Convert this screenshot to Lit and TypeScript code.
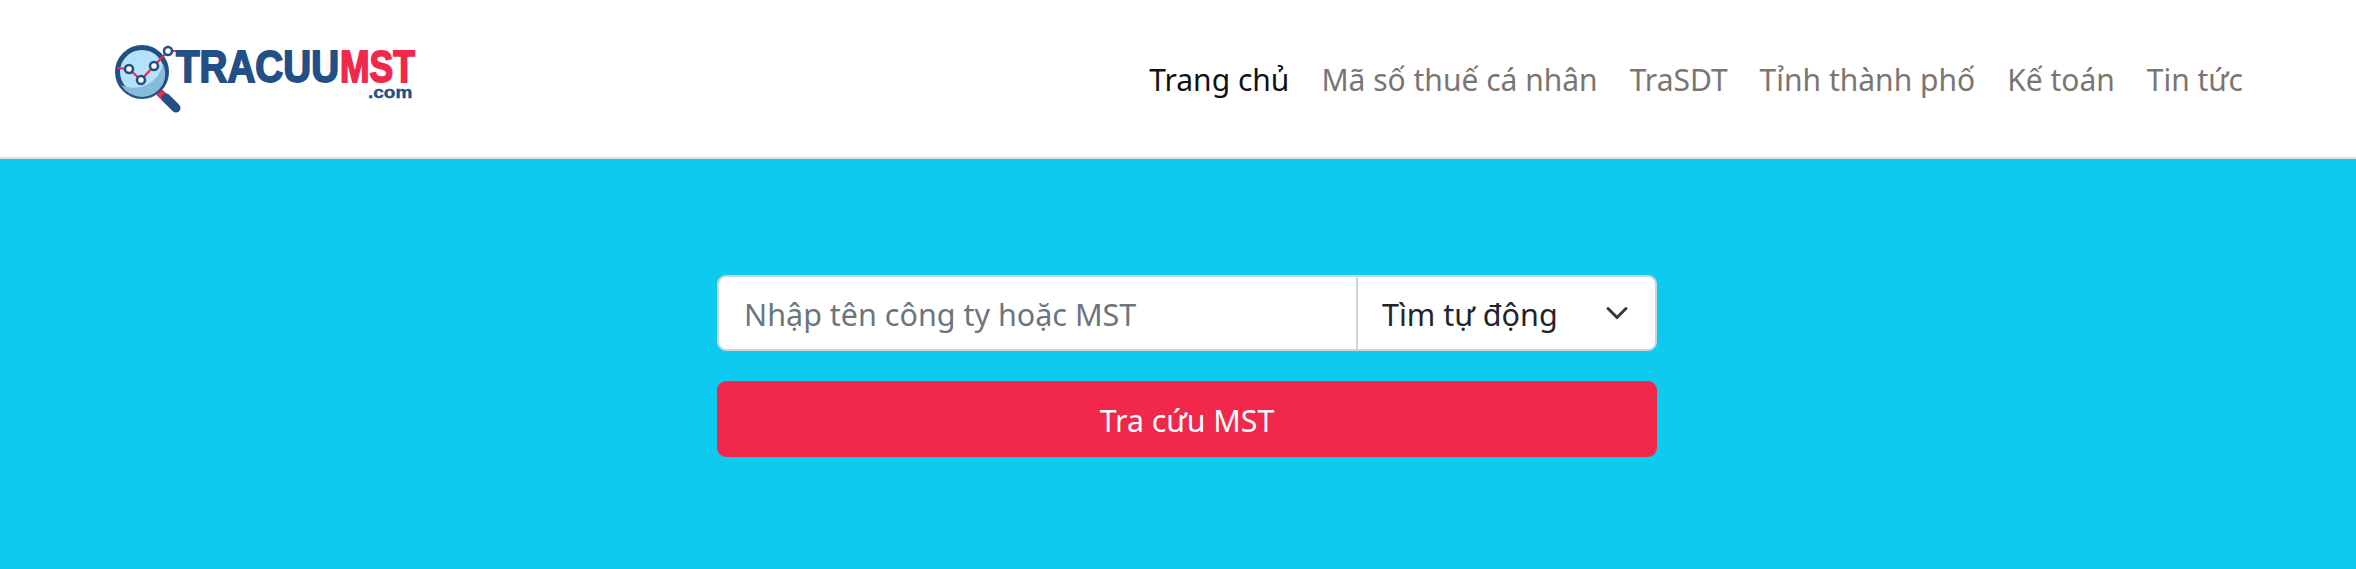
import { LitElement, html, css, svg } from "lit";
import { customElement } from "lit/decorators.js";

const NAV_ITEMS = ["Trang chủ", "Mã số thuế cá nhân", "TraSDT", "Tỉnh thành phố", "Kế toán", "Tin tức"];

const logo = svg`
  <svg class="logo" viewBox="0 0 330 90" width="330" height="90">
    <text class="word navy" transform="translate(76 52) scale(.878 1)">TRACUU</text>
    <text class="word red" transform="translate(240 52) scale(.807 1)">MST</text>
    <text class="dotcom" transform="translate(268 68) scale(1.12 1)">.com</text>
    <path d="M59 62 L76 78" stroke="#f1284b" stroke-width="8"/>
    <path d="M66 68 L76 78" stroke="#234f87" stroke-width="9" stroke-linecap="round"/>
    <circle cx="42" cy="42" r="24.5" fill="#b5e2fb" stroke="#234f87" stroke-width="5"/>
    <path d="M21 55 a24 24 0 0 0 42 -1 a24 24 0 0 0 0 -20 a30 30 0 0 1 -42 21z" fill="#87bcd8"/>
    <path d="M17 38 L29 39 L41 50 L54 36 L68 21 L76 21" fill="none" stroke="#f1284b" stroke-width="2.2"/>
    <circle cx="29" cy="39" r="4" fill="#fff" stroke="#234f87" stroke-width="2.6"/>
    <circle cx="41" cy="50" r="4" fill="#fff" stroke="#234f87" stroke-width="2.6"/>
    <circle cx="54" cy="36" r="4" fill="#fff" stroke="#234f87" stroke-width="2.6"/>
    <circle cx="68" cy="21" r="4" fill="#fff" stroke="#234f87" stroke-width="2.6"/>
  </svg>
`;

@customElement("app-root")
export class AppRoot extends LitElement {
  static styles = css`
    :host {
      display: block;
      height: 569px;
      background: #0dcaf0;
      font-family: "Noto Sans", "Open Sans", sans-serif;
      overflow: hidden;
    }

    header {
      height: 159px;
      box-sizing: border-box;
      background: #fff;
      border-bottom: 2px solid #dee2e6;
      padding: 0 97px 0 100px;
      display: flex;
      justify-content: space-between;
      align-items: flex-start;
    }

    .logo {
      display: block;
      margin-top: 30px;
    }

    .word {
      font-family: "Liberation Sans", sans-serif;
      font-weight: 700;
      font-size: 44px;
      stroke-width: 1.8px;
    }

    .navy {
      fill: #234f87;
      stroke: #234f87;
    }

    .red {
      fill: #f1284b;
      stroke: #f1284b;
    }

    .dotcom {
      font-family: "Liberation Sans", sans-serif;
      font-weight: 700;
      font-size: 17px;
      fill: #234f87;
      stroke: #234f87;
      stroke-width: 0.4px;
    }

    nav {
      display: flex;
      height: 159px;
      align-items: center;
    }

    nav a {
      padding: 0 16px;
      font-size: 30px;
      color: #7a7571;
      white-space: nowrap;
    }

    nav a.active {
      color: #111;
    }

    main {
      width: 940px;
      margin: 116px 0 0 717px;
      display: flex;
      flex-direction: column;
      gap: 30px;
    }

    .group {
      height: 76px;
      box-sizing: border-box;
      display: flex;
      background: #fff;
      border: 2px solid #ced4da;
      border-radius: 9px;
      font-size: 30.5px;
    }

    .field {
      flex: 1;
      min-width: 0;
      border: none;
      outline: none;
      background: transparent;
      padding: 2px 25px 0;
      font: inherit;
    }

    .field::placeholder {
      color: #6c757d;
      opacity: 1;
    }

    .select {
      width: 299px;
      box-sizing: border-box;
      border-left: 2px solid #ced4da;
      padding: 2px 26px 0 24px;
      display: flex;
      align-items: center;
      justify-content: space-between;
      color: #212529;
    }

    .select svg {
      display: block;
      margin-top: -2px;
    }

    .submit {
      height: 76px;
      border: none;
      border-radius: 9px;
      padding: 2px 0 0;
      background: #f1284b;
      color: #fff;
      font: inherit;
      font-size: 30.3px;
    }
  `;

  render() {
    return html`
      <header>
        ${logo}
        <nav>
          ${NAV_ITEMS.map((item, i) => html`<a class=${i === 0 ? "active" : ""}>${item}</a>`)}
        </nav>
      </header>
      <main>
        <div class="group">
          <input class="field" placeholder="Nhập tên công ty hoặc MST" />
          <div class="select">
            <span>Tìm tự động</span>
            <svg width="24" height="24" viewBox="0 0 16 16"><path d="M2 5l6 6 6-6" fill="none" stroke="#343a40" stroke-width="2" stroke-linecap="round" stroke-linejoin="round"/></svg>
          </div>
        </div>
        <button class="submit">Tra cứu MST</button>
      </main>
    `;
  }
}
